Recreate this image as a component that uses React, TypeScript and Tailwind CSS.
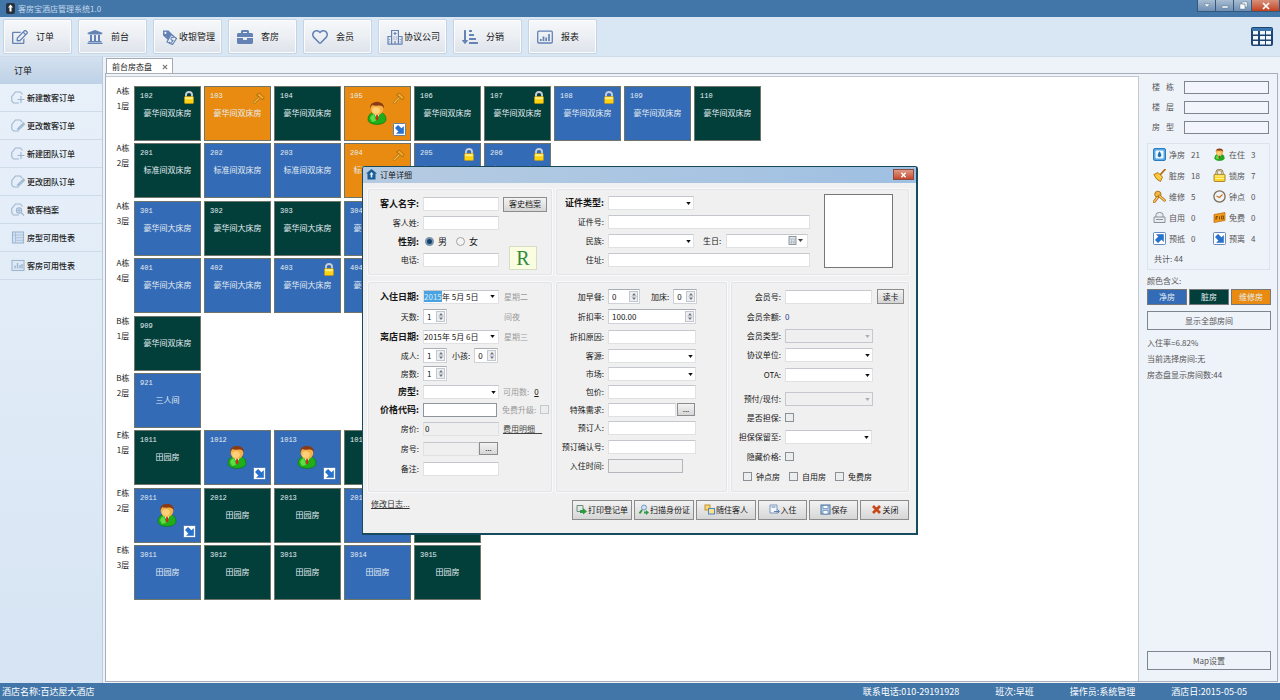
import React, { useState } from 'react';
import {
  FaRegEdit,
  FaUniversity,
  FaBriefcase,
  FaRegHeart,
  FaSortAmountDownAlt,
} from 'react-icons/fa';

type Status = 'clean' | 'dirty' | 'repair';

interface Room {
  no: string;
  status: Status;
  lock?: boolean;
  guest?: boolean;
}

interface Floor {
  building: string;
  level: string;
  type: string;
  rooms: Room[];
}

const tileColors: Record<Status, string> = {
  clean: 'bg-[#346bb6]',
  dirty: 'bg-[#023f3b]',
  repair: 'bg-[#e88b10]',
};

const floors: Floor[] = [
  {
    building: 'A栋', level: '1层', type: '豪华间双床房',
    rooms: [
      { no: '102', status: 'dirty', lock: true },
      { no: '103', status: 'repair' },
      { no: '104', status: 'dirty' },
      { no: '105', status: 'repair', guest: true },
      { no: '106', status: 'dirty' },
      { no: '107', status: 'dirty', lock: true },
      { no: '108', status: 'clean', lock: true },
      { no: '109', status: 'clean' },
      { no: '110', status: 'dirty' },
    ],
  },
  {
    building: 'A栋', level: '2层', type: '标准间双床房',
    rooms: [
      { no: '201', status: 'dirty' },
      { no: '202', status: 'clean' },
      { no: '203', status: 'clean' },
      { no: '204', status: 'repair' },
      { no: '205', status: 'clean', lock: true },
      { no: '206', status: 'clean', lock: true },
    ],
  },
  {
    building: 'A栋', level: '3层', type: '豪华间大床房',
    rooms: [
      { no: '301', status: 'clean' },
      { no: '302', status: 'dirty' },
      { no: '303', status: 'dirty' },
      { no: '304', status: 'clean' },
    ],
  },
  {
    building: 'A栋', level: '4层', type: '豪华间大床房',
    rooms: [
      { no: '401', status: 'clean' },
      { no: '402', status: 'clean' },
      { no: '403', status: 'clean', lock: true },
      { no: '404', status: 'clean' },
    ],
  },
  { building: 'B栋', level: '1层', type: '豪华间双床房', rooms: [{ no: '909', status: 'dirty' }] },
  { building: 'B栋', level: '2层', type: '三人间', rooms: [{ no: '921', status: 'clean' }] },
  {
    building: 'E栋', level: '1层', type: '田园房',
    rooms: [
      { no: '1011', status: 'dirty' },
      { no: '1012', status: 'clean', guest: true },
      { no: '1013', status: 'clean', guest: true },
      { no: '1014', status: 'dirty' },
    ],
  },
  {
    building: 'E栋', level: '2层', type: '田园房',
    rooms: [
      { no: '2011', status: 'clean', guest: true },
      { no: '2012', status: 'dirty' },
      { no: '2013', status: 'dirty' },
      { no: '2014', status: 'clean' },
      { no: '2015', status: 'dirty' },
    ],
  },
  {
    building: 'E栋', level: '3层', type: '田园房',
    rooms: [
      { no: '3011', status: 'clean' },
      { no: '3012', status: 'dirty' },
      { no: '3013', status: 'dirty' },
      { no: '3014', status: 'clean' },
      { no: '3015', status: 'dirty' },
    ],
  },
];

/* ---------- Icons ---------- */

interface IconProps {
  className?: string;
}

const TagIcon = ({ className = '' }: IconProps) => (
  <svg viewBox="0 0 16 16" className={className}>
    <path d="M1 1.500h5.500L12 7 7 12 1 6.500z" fill="currentColor" />
    <circle cx="3.400" cy="3.900" r="1.100" fill="#eef2f6" />
    <path d="m9 5.500 5.500 4-4 6L5 13z" fill="#eef2f6" stroke="currentColor" strokeWidth="1.300" strokeLinejoin="round" />
    <path d="M11.800 8.800Q9 7.500 9 9.500t1.500 1.700-.800 2-2.200-.400" fill="none" stroke="currentColor" strokeWidth="1.100" />
  </svg>
);

const BuildingIcon = ({ className = '' }: IconProps) => (
  <svg viewBox="0 0 16 16" className={className} fill="none" stroke="currentColor" strokeWidth="1.200">
    <path d="M4.600 15V1.500h6.800V15M1 15V7.500h3.600M11.400 7.500H15V15M.500 15.200h15" />
    <path d="M8 3v3M6.500 4.500h3M6.500 8h1M8.700 8h1M6.500 10h1M8.700 10h1M8 15v-3M2.500 10v.800M2.500 12.500v.800M13.300 10v.800M13.300 12.500v.800" />
  </svg>
);

const ChartIcon = ({ className = '' }: IconProps) => (
  <svg viewBox="0 0 16 16" className={className} fill="none" stroke="currentColor">
    <rect x="0.700" y="2.200" width="14.600" height="11.800" rx="1" strokeWidth="1.300" />
    <path d="M3.800 12v-2M6.500 12V7.500M9.200 12V8.500M12 12V5" strokeWidth="1.700" />
  </svg>
);

const LockIcon = ({ className = '' }: IconProps) => (
  <svg viewBox="0 0 10 13" className={className}>
    <path d="M2 6V3.600Q2 1 5 1t3 2.600V6" fill="none" stroke="#c9ced6" strokeWidth="1.900" />
    <rect x="0.500" y="5.500" width="9" height="7" rx="0.800" fill="#fbd312" stroke="#c79412" strokeWidth="0.600" />
    <rect x="1.200" y="6.200" width="7.600" height="2" fill="#fff08a" />
  </svg>
);

const PadlockIcon = ({ className = '' }: IconProps) => (
  <svg viewBox="0 0 13 13" className={className}>
    <path d="M3.500 6V4Q3.500 1 6.500 1t3 3v2" fill="none" stroke="#7d6a3c" strokeWidth="2" />
    <path d="M3.500 6V4Q3.500 1 6.500 1t3 3v2" fill="none" stroke="#f3e9c2" strokeWidth="0.800" />
    <rect x="1" y="5.300" width="11" height="7.200" rx="0.800" fill="#fbd62a" stroke="#9a7414" strokeWidth="0.800" />
    <path d="M2 7h9M2 9.500h9" stroke="#fff3a0" strokeWidth="1" />
  </svg>
);

const HammerIcon = ({ className = '' }: IconProps) => (
  <svg viewBox="0 0 12 12" className={className}>
    <path d="M1 11 7.500 4.500" stroke="#8a5a14" strokeWidth="2.400" strokeLinecap="round" />
    <path d="M1 11 7.500 4.500" stroke="#f9bd3c" strokeWidth="1.400" strokeLinecap="round" />
    <path d="M3.500 3 6.500 1 11 5.500 9.500 8 7 5.500z" fill="#f5a623" stroke="#8a5a14" strokeWidth="0.700" />
  </svg>
);

const WrenchIcon = ({ className = '' }: IconProps) => (
  <svg viewBox="0 0 12 12" className={className}>
    <circle cx="4.500" cy="4" r="2.900" fill="#f6b73c" stroke="#a56a12" strokeWidth="0.800" />
    <path d="M1 11 4 7M6 5.500l4.500 4" stroke="#a56a12" strokeWidth="2.600" strokeLinecap="round" />
    <path d="M1 11 4 7M6 5.500l4.500 4" stroke="#fbc65a" strokeWidth="1.400" strokeLinecap="round" />
  </svg>
);

const GuestIcon = ({ className = '' }: IconProps) => (
  <svg viewBox="0 0 20 24" className={className}>
    <path d="M1 19q0-7 6-7.500h6q6 .500 6 7.500-1 4-9 4.500-8-.500-9-4.500z" fill="#1fae1a" stroke="#0c7a10" strokeWidth="0.700" />
    <path d="M3 17q1-3 4-4l2 7-4 1z" fill="#62dc46" />
    <path d="M7 12h6l-3 6z" fill="#fff" />
    <path d="m9.300 13.500h1.500l.700 4.500-1.400 1.500-1.300-1.500z" fill="#d42a1a" />
    <ellipse cx="10" cy="8" rx="6.300" ry="6" fill="#f7b046" />
    <ellipse cx="9" cy="9.500" rx="3.800" ry="3.200" fill="#ffd07a" />
    <path d="M3.200 7.500Q2.500 1.500 10 .800 17.500 1.500 16.800 7.500 15.500 4 12 4.500 7 5 5 4 4 5.500 3.200 7.500z" fill="#8a3a14" />
  </svg>
);

const ArrowBadge = ({ className = '', up = false }: IconProps & { up?: boolean }) => (
  <svg viewBox="0 0 13 13" className={className}>
    <rect x="0.500" y="0.500" width="12" height="12" rx="1" fill="#fff" stroke="#3f6fae" strokeWidth="0.800" />
    {up ? (
      <path d="M3.500 2.500h7v7L8.500 7.500 5 10.800 2.300 8 5.500 4.500z" fill="#2473d2" stroke="#154d99" strokeWidth="0.400" />
    ) : (
      <path d="M10.600 10.600h-7l2-2L2.300 5 5 2.300l3.500 3.300 2.100-2z" fill="#2473d2" stroke="#154d99" strokeWidth="0.400" />
    )}
  </svg>
);

const SideIcon = ({ kind }: { kind: string }) => (
  <svg viewBox="0 0 14 13" className="h-[13px] w-[14px]" fill="none" stroke="#9db6cf" strokeWidth="1.100">
    {['add', 'edit', 'file'].includes(kind) && <path d="M8 12H2.500L.800 10V5.500L4.500 1h4.800L11.500 3.500" />}
    {kind === 'add' && <path d="M10 5v7M6.500 8.500h7" />}
    {kind === 'edit' && <path d="m6.500 10 6-6 1 1.200-5.500 5.500z" fill="#c9d9ea" />}
    {kind === 'file' && (
      <>
        <circle cx="8" cy="7.500" r="2.600" fill="#dfe9f4" />
        <path d="m10 9.500 3 3M8 6v3M6.500 7.500h3" />
      </>
    )}
    {kind === 'table' && (
      <>
        <rect x="1.500" y="1" width="11" height="11" fill="#d3e2f3" />
        <path d="M4.500 1v11M1.500 4h11M4.500 6.700h8M4.500 9.300h8" strokeWidth="0.700" />
      </>
    )}
    {kind === 'chart' && (
      <>
        <rect x="1" y="1.500" width="12" height="10" fill="#dfe9f6" />
        <path d="M4 9.500v-3M6.500 9.500V4M9 9.500V6M11 9.500V5" strokeWidth="1.400" />
      </>
    )}
  </svg>
);

const StatIcon = ({ kind }: { kind: string }) => {
  const cls = 'h-[13px] w-[13px]';
  switch (kind) {
    case 'clean':
      return (
        <svg viewBox="0 0 13 13" className={cls}>
          <rect x="0.500" y="0.500" width="12" height="12" rx="1.500" fill="#59a9e6" stroke="#2b7cc0" />
          <rect x="2.500" y="2.500" width="8" height="8" rx="1" fill="#f2faff" />
          <path d="M6.500 3.200q3.800 4.800 0 6-3.800-1.200 0-6z" fill="#1f6fb8" />
        </svg>
      );
    case 'guest':
      return <GuestIcon className={cls} />;
    case 'dirty':
      return (
        <svg viewBox="0 0 13 13" className={cls}>
          <path d="m7.500 5.500 4.500-5" stroke="#b36d0c" strokeWidth="1.800" strokeLinecap="round" />
          <path d="M.800 5.500 5 3.500 9.500 8 7.500 12.500Q3 11 .800 5.500z" fill="#fbbf24" stroke="#a8660c" strokeWidth="0.800" />
          <path d="m3 6.500 4 4M5 5.500l3.500 3.500" stroke="#fff0a8" strokeWidth="0.700" />
        </svg>
      );
    case 'lock':
      return <PadlockIcon className={cls} />;
    case 'repair':
      return <WrenchIcon className={cls} />;
    case 'clock':
      return (
        <svg viewBox="0 0 13 13" className={cls}>
          <circle cx="6.500" cy="6.500" r="5.600" fill="#eef4fa" stroke="#7d6a52" strokeWidth="1.300" />
          <path d="m3.500 6 3 1.500L9.500 4.500" fill="none" stroke="#d07018" strokeWidth="1.100" />
        </svg>
      );
    case 'self':
      return (
        <svg viewBox="0 0 13 13" className={cls} fill="#e9edf1" stroke="#7f8890" strokeWidth="0.900">
          <path d="M3 6V3.500Q3 1.500 6.500 1.500T10 3.500V6" />
          <path d="M1 6h11v5.500H1zM3 8.500h7" />
        </svg>
      );
    case 'free':
      return (
        <svg viewBox="0 0 13 13" className={cls}>
          <path d="M1 3.500 12 1.500v8L1 11.500z" fill="#f29a1a" stroke="#b8690a" strokeWidth="0.700" />
          <path d="M3 9V5.500h2M3 7h1.500M6.500 8.500V5.500M8.500 5v3h2V5z" stroke="#6b3c05" strokeWidth="0.800" fill="none" />
        </svg>
      );
    case 'arrive':
      return <ArrowBadge className={cls} up />;
    default:
      return <ArrowBadge className={cls} />;
  }
};

const ActionIcon = ({ kind }: { kind: string }) => (
  <svg viewBox="0 0 11 11" className="h-[11px] w-[11px] shrink-0" fill="none">
    {kind === 'print' && (
      <>
        <path d="M1 1.500h6v6H1z" fill="#dfe9e4" stroke="#6f8c80" />
        <path d="M4 6h3V4l4 3.500-4 3V9H4z" fill="#2d9a45" />
      </>
    )}
    {kind === 'scan' && (
      <>
        <circle cx="6" cy="3.500" r="2.500" fill="#cfe3f5" stroke="#6f96bd" />
        <path d="M4 6 1.500 9.500" stroke="#2d9a45" strokeWidth="2" />
        <path d="M6 7.500h2V6l3 2.500-3 2.500V9.500H6z" fill="#2d9a45" />
      </>
    )}
    {kind === 'follow' && (
      <>
        <rect x="1" y="1" width="5" height="5" fill="#f9d77a" stroke="#c29427" />
        <rect x="4.500" y="4.500" width="6" height="5.500" fill="#fbe08e" stroke="#4f86c4" />
      </>
    )}
    {kind === 'checkin' && (
      <>
        <path d="M1 1h7v8H1z" fill="#f4f8fd" stroke="#7a94b8" />
        <path d="M2.500 3h4M5 7.500h5M8.500 5.500l2 2-2 2" stroke="#5a82b8" />
      </>
    )}
    {kind === 'save' && (
      <>
        <rect x="1" y="1" width="9" height="9" fill="#b5cfec" stroke="#44729f" />
        <path d="M3 1.500h5v3H3zM3 6.500h5V10H3z" fill="#fff" stroke="#44729f" strokeWidth="0.600" />
      </>
    )}
    {kind === 'close' && <path d="m2 2 7 7M9 2 2 9" stroke="#c9481a" strokeWidth="2.800" />}
  </svg>
);

/* ---------- Form controls ---------- */

const inputBase = 'h-[14px] border border-[#dfe1e5] border-t-[#c4c8ce] bg-white px-px text-[8px] leading-none outline-none';

interface RowProps {
  label: string;
  id?: string;
  bold?: boolean;
  tall?: boolean;
  width?: string;
  className?: string;
  children: React.ReactNode;
}

const Row = ({ label, id, bold, tall, width = 'w-[50px]', className = '', children }: RowProps) => (
  <div className={`flex items-center gap-1 ${tall ? 'h-5' : 'h-[18px]'} ${className}`}>
    <label
      htmlFor={id}
      className={`${width} shrink-0 text-right whitespace-nowrap ${bold ? 'text-[9px] font-bold' : 'text-[8px]'}`}
    >
      {label}:
    </label>
    {children}
  </div>
);

const Text = ({ id, width = 'w-[76px]', value = '', disabled = false }: { id: string; width?: string; value?: string; disabled?: boolean }) => (
  <input
    id={id}
    type="text"
    defaultValue={value}
    disabled={disabled}
    className={`${inputBase} ${width} disabled:bg-[#efefef]`}
  />
);

const Select = ({ id, width = 'w-[76px]', disabled = false }: { id: string; width?: string; disabled?: boolean }) => (
  <span className={`relative flex ${width}`}>
    <select id={id} disabled={disabled} className={`${inputBase} w-full appearance-none disabled:border-[#c4c8ce] disabled:bg-[#efefef]`}>
      <option></option>
    </select>
    <svg viewBox="0 0 6 4" className="pointer-events-none absolute top-[6px] right-[3px] h-[3px] w-[5px]">
      <path d="M0 0h6L3 4z" fill={disabled ? '#a9adb3' : '#111'} />
    </svg>
  </span>
);

const Spin = ({ id, value, width = 'w-6' }: { id: string; value: string; width?: string }) => (
  <span className={`flex h-[15px] ${width} items-center border border-[#cfd3d9] border-t-[#a9aeb6] bg-white pr-px`}>
    <input id={id} type="text" defaultValue={value} className="w-0 flex-1 pl-[3px] text-[8px] leading-none outline-none" />
    <button type="button" aria-label="调整" className="flex h-[11px] w-[9px] items-center justify-center border border-[#c3c7cd] bg-[#eceef1]">
      <svg viewBox="0 0 6 9" className="h-[9px] w-[6px]">
        <path d="M1 3.500h4L3 1zM1 5.500h4L3 8z" fill="#6d7580" />
        <path d="M0 4.500h6" stroke="#c3c7cd" strokeWidth="0.600" />
      </svg>
    </button>
  </span>
);

const DateBox = ({ id, year, rest, selected }: { id: string; year: string; rest: string; selected?: boolean }) => (
  <span className="flex h-[14px] w-[76px] items-center border border-[#dfe1e5] border-t-[#c4c8ce] bg-white">
    <input
      id={id}
      type="text"
      defaultValue={year}
      className={`w-[18px] text-[8px] leading-[11px] outline-none ${selected ? 'bg-[#4aa3e0] text-[#d7ecfb]' : ''}`}
    />
    <input type="text" aria-label="月日" defaultValue={rest} className="w-0 flex-1 text-[8px] leading-none outline-none" />
    <svg viewBox="0 0 6 4" className="mr-[3px] h-[3px] w-[5px]">
      <path d="M0 0h6L3 4z" fill="#111" />
    </svg>
  </span>
);

const Check = ({ id, disabled = false }: { id: string; disabled?: boolean }) => (
  <input
    id={id}
    type="checkbox"
    disabled={disabled}
    className="h-[9px] w-[9px] shrink-0 appearance-none border border-[#8b9096] bg-[#eceded] checked:bg-[#346bb6] disabled:border-[#c4c8cc]"
  />
);

const btn = 'border border-[#8c8c8c] bg-linear-to-b from-[#f3f3f3] to-[#d6d6d6] whitespace-nowrap text-[8px] leading-none';

const panel = 'rounded-[2px] border border-[#e2e4e8] shadow-[0_0_0_1px_#f8f9fa]';

/* ---------- Order dialog ---------- */

const actions = [
  { icon: 'print', text: '打印登记单', width: 'w-[60px]' },
  { icon: 'scan', text: '扫描身份证', width: 'w-[60px]' },
  { icon: 'follow', text: '随住客人', width: 'w-[60px]' },
  { icon: 'checkin', text: '入住', width: 'w-[49px]' },
  { icon: 'save', text: '保存', width: 'w-[49px]' },
  { icon: 'close', text: '关闭', width: 'w-[49px]' },
];

const OrderDialog = ({ onClose }: { onClose: () => void }) => (
  <div
    role="dialog"
    aria-label="订单详细"
    className="w-[556px] rounded-t-[3px] border-t border-r-2 border-b-2 border-l border-[#174a5c] bg-[#f0f0f0] text-[#161616]"
  >
    <div className="flex h-4 items-center rounded-t-[2px] bg-linear-to-r from-[#b6cbe2] to-[#9fc0e2] pl-[3px]">
      <svg viewBox="0 0 11 11" className="h-[11px] w-[11px]">
        <path d="M5.500 0 11 4.500H9.500V10.500h-8V4.500H0z" fill="#1a5c94" />
        <path d="M5.500 3 7.500 5.500h-1.200v3H4.700v-3H3.500z" fill="#e8f2fb" />
      </svg>
      <h2 className="ml-[3px] text-[8px] leading-none">订单详细</h2>
      <button
        type="button"
        aria-label="关闭"
        onClick={onClose}
        className="mr-[2px] ml-auto flex h-[11px] w-[21px] items-center justify-center border border-[#8d4a40] bg-linear-to-b from-[#dc9a86] to-[#c5462a]"
      >
        <svg viewBox="0 0 7 7" className="h-[6px] w-[7px]"><path d="m1 1 5 5M6 1 1 6" stroke="#fff" strokeWidth="1.600" /></svg>
      </button>
    </div>

    <form className="pt-[6px] pr-[7px] pl-[5px]" onSubmit={e => e.preventDefault()}>
      <div className="grid grid-cols-[184px_171px_1fr] gap-x-1 gap-y-[7px]">
        {/* Guest name */}
        <section className={`${panel} flex gap-1 pt-[5px] pb-1`}>
          <div>
            <Row label="客人名字" id="name" bold><Text id="name" /></Row>
            <Row label="客人姓" id="surname" tall><Text id="surname" /></Row>
            <Row label="性别" bold>
              <input id="male" name="sex" type="radio" defaultChecked className="ml-[2px] h-[9px] w-[9px] appearance-none rounded-full border border-[#8b9096] bg-white checked:border-2 checked:border-[#7d93aa] checked:bg-[#12436f]" />
              <label htmlFor="male" className="text-[9px]">男</label>
              <input id="female" name="sex" type="radio" className="ml-[5px] h-[9px] w-[9px] appearance-none rounded-full border border-[#9fa4aa] bg-[#f4f4f4] checked:border-2 checked:border-[#7d93aa] checked:bg-[#12436f]" />
              <label htmlFor="female" className="text-[9px]">女</label>
            </Row>
            <Row label="电话" id="phone"><Text id="phone" /></Row>
          </div>
          <div className="flex flex-1 flex-col justify-between pt-[2px]">
            <button type="button" className={`${btn} h-[15px] w-[44px]`}>客史档案</button>
            <span className="ml-[6px] flex h-[24px] w-[28px] items-center justify-center border border-[#d7dcc6] bg-[#fbfde0] font-['Liberation_Serif',serif] text-[20px] leading-none text-[#2f8b3c]">R</span>
          </div>
        </section>

        {/* ID papers */}
        <section className={`${panel} col-span-2 flex pt-1 pb-1`}>
          <div>
            <Row label="证件类型" id="idtype" bold width="w-[47px]"><Select id="idtype" width="w-[86px]" /></Row>
            <Row label="证件号" id="idno" tall width="w-[47px]"><Text id="idno" width="w-[202px]" /></Row>
            <Row label="民族" id="nation" width="w-[47px]">
              <Select id="nation" width="w-[86px]" />
              <label htmlFor="birth" className="ml-[5px] text-[8px]">生日:</label>
              <span className="ml-px flex h-[14px] w-[82px] items-center border border-[#dfe1e5] border-t-[#c4c8ce] bg-white">
                <input id="birth" type="text" className="w-0 flex-1 text-[8px] leading-none outline-none" />
                <svg viewBox="0 0 16 9" className="mr-[3px] h-[9px] w-4">
                  <rect x="1" y="0.500" width="7" height="8" fill="#dfe4ea" stroke="#77808a" strokeWidth="0.800" />
                  <path d="M1 3h7M3.500 3v5.500M6 3v5.500M1 6h7" stroke="#98a1ab" strokeWidth="0.500" />
                  <path d="M10 3h5l-2.500 3z" fill="#444" />
                </svg>
              </span>
            </Row>
            <Row label="住址" id="addr" tall width="w-[47px]"><Text id="addr" width="w-[202px]" /></Row>
          </div>
          <div className="ml-[14px] h-[74px] w-[69px] border border-[#777] bg-white" />
        </section>

        {/* Stay */}
        <section className={`${panel} pt-1 pb-3`}>
          <Row label="入住日期" id="arrive" bold tall>
            <DateBox id="arrive" year="2015" rest="年 5月 5日" selected />
            <span className="ml-px text-[8px] text-[#9b9b9b]">星期二</span>
          </Row>
          <Row label="天数" id="days" tall>
            <Spin id="days" value="1" />
            <span className="ml-[53px] text-[8px] text-[#9b9b9b]">间夜</span>
          </Row>
          <Row label="离店日期" id="leave" bold tall>
            <DateBox id="leave" year="2015" rest="年 5月 6日" />
            <span className="ml-px text-[8px] text-[#9b9b9b]">星期三</span>
          </Row>
          <Row label="成人" id="adult">
            <Spin id="adult" value="1" />
            <label htmlFor="child" className="ml-px text-[8px]">小孩:</label>
            <Spin id="child" value="0" />
          </Row>
          <Row label="房数" id="count"><Spin id="count" value="1" /></Row>
          <Row label="房型" id="rtype" bold>
            <Select id="rtype" />
            <span className="text-[8px] text-[#9b9b9b]">可用数:</span>
            <a href="#avail" className="ml-px text-[8px] underline">0</a>
          </Row>
          <Row label="价格代码" id="rate" bold>
            <input id="rate" type="text" className="h-[14px] w-[74px] border border-[#8f959c] bg-white text-[8px] outline-none" />
            <label htmlFor="upgrade" className="ml-px text-[8px] text-[#9b9b9b]">免费升级:</label>
            <Check id="upgrade" disabled />
          </Row>
          <Row label="房价" id="price" tall>
            <Text id="price" value="0" disabled />
            <a href="#detail" className="text-[8px] whitespace-pre text-[#444] underline">费用明细    </a>
          </Row>
          <Row label="房号" id="roomno" tall>
            <span className="flex">
              <Text id="roomno" width="w-14" disabled />
              <button type="button" className={`${btn} h-[13px] w-[19px]`}>...</button>
            </span>
          </Row>
          <Row label="备注" id="remark" tall><Text id="remark" /></Row>
        </section>

        {/* Rate and source */}
        <section className={`${panel} pt-1`}>
          <Row label="加早餐" id="bf" tall width="w-[47px]">
            <Spin id="bf" value="0" width="w-8" />
            <label htmlFor="bed" className="ml-[7px] text-[8px]">加床:</label>
            <Spin id="bed" value="0" />
          </Row>
          <Row label="折扣率" id="disc" tall width="w-[47px]"><Spin id="disc" value="100.00" width="w-[88px]" /></Row>
          <Row label="折扣原因" id="reason" tall width="w-[47px]"><Text id="reason" width="w-[88px]" /></Row>
          <Row label="客源" id="source" width="w-[47px]"><Select id="source" width="w-[88px]" /></Row>
          <Row label="市场" id="market" width="w-[47px]"><Select id="market" width="w-[88px]" /></Row>
          <Row label="包价" id="pack" width="w-[47px]"><Text id="pack" width="w-[88px]" /></Row>
          <Row label="特殊需求" id="need" width="w-[47px]">
            <span className="flex gap-px">
              <Text id="need" width="w-[68px]" />
              <button type="button" className={`${btn} h-[13px] w-[18px]`}>...</button>
            </span>
          </Row>
          <Row label="预订人" id="booker" width="w-[47px]"><Text id="booker" width="w-[88px]" /></Row>
          <Row label="预订确认号" id="confirm" tall width="w-[47px]"><Text id="confirm" width="w-[88px]" /></Row>
          <Row label="入住时间" id="intime" width="w-[47px]">
            <input id="intime" type="text" disabled className="h-[14px] w-[75px] border border-[#b4b7bb] bg-[#efefef]" />
          </Row>
        </section>

        {/* Membership */}
        <section className={`${panel} pt-1`}>
          <Row label="会员号" id="member" tall width="w-[49px]">
            <Text id="member" width="w-[87px]" />
            <button type="button" className={`${btn} ml-px h-[15px] w-[27px]`}>读卡</button>
          </Row>
          <Row label="会员余额" tall width="w-[49px]"><span className="text-[8px] text-[#2b3f8f]">0</span></Row>
          <Row label="会员类型" id="mtype" width="w-[49px]"><Select id="mtype" width="w-[88px]" disabled /></Row>
          <Row label="协议单位" id="corp" tall width="w-[49px]"><Select id="corp" width="w-[88px]" /></Row>
          <Row label="OTA" id="ota" tall width="w-[49px]"><Select id="ota" width="w-[88px]" /></Row>
          <Row label="预付/现付" id="pay" tall width="w-[49px]" className="mt-1"><Select id="pay" width="w-[88px]" disabled /></Row>
          <Row label="是否担保" id="guar" width="w-[49px]"><Check id="guar" /></Row>
          <Row label="担保保留至" id="until" tall width="w-[49px]"><Select id="until" width="w-[87px]" /></Row>
          <Row label="隐藏价格" id="hide" tall width="w-[49px]"><Check id="hide" /></Row>
          <div className="flex h-5 items-center pl-[11px] text-[8px]">
            <Check id="hour" />
            <label htmlFor="hour" className="mr-[9px] ml-1">钟点房</label>
            <Check id="self" />
            <label htmlFor="self" className="mr-[9px] ml-1">自用房</label>
            <Check id="free" />
            <label htmlFor="free" className="ml-1">免费房</label>
          </div>
        </section>
      </div>

      <div className="flex h-[41px] items-start pt-2">
        <a href="#log" className="ml-[3px] text-[8px] text-[#333] underline">修改日志...</a>
        <div className="ml-auto flex gap-[2px]">
          {actions.map(a => (
            <button key={a.text} type="button" className={`${btn} ${a.width} flex h-5 items-center justify-center gap-px`}>
              <ActionIcon kind={a.icon} />
              {a.text}
            </button>
          ))}
        </div>
      </div>
    </form>
  </div>
);

/* ---------- Main window ---------- */

const toolbar = [
  { text: '订单', icon: FaRegEdit },
  { text: '前台', icon: FaUniversity },
  { text: '收银管理', icon: TagIcon },
  { text: '客房', icon: FaBriefcase },
  { text: '会员', icon: FaRegHeart },
  { text: '协议公司', icon: BuildingIcon },
  { text: '分销', icon: FaSortAmountDownAlt },
  { text: '报表', icon: ChartIcon },
];

const sideItems = [
  { text: '新建散客订单', kind: 'add' },
  { text: '更改散客订单', kind: 'edit' },
  { text: '新建团队订单', kind: 'add' },
  { text: '更改团队订单', kind: 'edit' },
  { text: '散客档案', kind: 'file' },
  { text: '房型可用性表', kind: 'table' },
  { text: '客房可用性表', kind: 'chart' },
];

const stats = [
  { kind: 'clean', text: '净房', value: 21 },
  { kind: 'guest', text: '在住', value: 3 },
  { kind: 'dirty', text: '脏房', value: 18 },
  { kind: 'lock', text: '锁房', value: 7 },
  { kind: 'repair', text: '维修', value: 5 },
  { kind: 'clock', text: '钟点', value: 0 },
  { kind: 'self', text: '自用', value: 0 },
  { kind: 'free', text: '免费', value: 0 },
  { kind: 'arrive', text: '预抵', value: 0 },
  { kind: 'depart', text: '预离', value: 4 },
];

const filters = [
  ['楼', '栋'],
  ['楼', '层'],
  ['房', '型'],
];

const RoomTile = ({ room, type }: { room: Room; type: string }) => (
  <div className={`relative h-[55px] w-[67px] border border-[#6f7568] text-[#e6eef2] ${tileColors[room.status]}`}>
    <div className="pt-[5px] pl-[5px] font-['Liberation_Mono',monospace] text-[7px] leading-[8px]">{room.no}</div>
    {!room.guest && <div className="pt-2 text-center text-[8px] leading-[10px]">{type}</div>}
    {room.lock && <LockIcon className="absolute top-1 right-[6px] h-[13px] w-[10px]" />}
    {room.status === 'repair' && <HammerIcon className="absolute top-[5px] right-[5px] h-[12px] w-[12px]" />}
    {room.guest && (
      <>
        <GuestIcon className="absolute top-[14px] left-[22px] h-[24px] w-[20px]" />
        <ArrowBadge className="absolute right-1 bottom-1 h-[13px] w-[13px]" />
      </>
    )}
  </div>
);

const App: React.FC = () => {
  const [dialogOpen, setDialogOpen] = useState(true);

  return (
    <div className="flex min-h-screen flex-col bg-[#eef2f9] font-['Noto_Sans_CJK_SC',sans-serif] text-[8px] leading-none text-[#1b1b1b]">
      {/* Title bar */}
      <header className="flex h-[17px] items-start bg-[#4276a8] pl-[6px] text-[#c3d8ec]">
        <svg viewBox="0 0 9 11" className="mt-[3px] h-[11px] w-[9px]">
          <rect width="9" height="11" rx="2" fill="#26323e" />
          <path d="M4.500 1.500 7 4.500H5.500v4h-2v-4H2z" fill="#fff" />
        </svg>
        <h1 className="mt-[5px] ml-[3px] text-[8px]">客房宝酒店管理系统1.0</h1>
        <div className="ml-auto flex h-3 border border-t-0 border-[#35597d]">
          {['M2 3h6L5 6z', 'M2 5h6v2H2z', 'M2 3h5v5H2zM4 1h5v5H7V3H4z'].map((d, i) => (
            <button key={d} type="button" aria-label={['菜单', '最小化', '还原'][i]} className="flex w-[18px] items-center justify-center border-r border-[#35597d] bg-linear-to-b from-[#a9bdd2] to-[#6f8fb2]">
              <svg viewBox="0 0 10 9" className="h-[9px] w-[10px]"><path d={d} fill="#fff" stroke="#4a6685" strokeWidth="0.400" /></svg>
            </button>
          ))}
          <button type="button" aria-label="退出" className="flex w-[27px] items-center justify-center bg-linear-to-b from-[#d8907a] to-[#c0401c]">
            <svg viewBox="0 0 8 8" className="h-2 w-2"><path d="m1 1 6 6M7 1 1 7" stroke="#fff" strokeWidth="1.700" /></svg>
          </button>
        </div>
      </header>

      {/* Toolbar */}
      <nav className="flex h-10 items-center gap-[6px] border-b border-[#cfdbe8] bg-[#d9e6f3] pl-[3px]">
        {toolbar.map(item => (
          <button
            key={item.text}
            type="button"
            className="flex h-[35px] w-[69px] items-center rounded-[2px] border border-[#c5d3e2] bg-linear-to-b from-[#f6f8fa] via-[#eceff3] to-[#dde3eb] pl-2 text-[9px] whitespace-nowrap shadow-[inset_0_0_0_1px_#fbfcfd]"
          >
            <item.icon className="h-4 w-4 shrink-0 text-[#6483b4]" />
            <span className={item.text.length > 2 ? 'ml-px' : 'ml-2'}>{item.text}</span>
          </button>
        ))}
        <button type="button" aria-label="房态图" className="mr-[7px] ml-auto">
          <svg viewBox="0 0 22 19" className="h-[19px] w-[22px]">
            <rect width="22" height="19" rx="2" fill="#1d4473" />
            <rect x="1" y="1" width="20" height="3" rx="1" fill="#3b77ae" />
            {[4, 9, 14].map(y => [2, 9, 15].map(x => <rect key={`${x}-${y}`} x={x} y={y} width="5" height="3.500" fill="#f3f8fd" />))}
          </svg>
        </button>
      </nav>

      <div className="flex flex-1">
        {/* Sidebar */}
        <aside className="w-[103px] shrink-0 border-r border-[#bccbdc] bg-linear-to-b from-[#e9f1fa] to-[#d6e4f3]">
          <h2 className="flex h-[27px] items-center bg-linear-to-b from-[#d3e1f0] to-[#bed1e6] pl-[14px] text-[9px]">订单</h2>
          <ul>
            {sideItems.map(item => (
              <li key={item.text} className="h-7 border-b border-[#cddae8]">
                <a href="#order" className="flex h-full items-center gap-[2px] pl-[11px] font-medium">
                  <SideIcon kind={item.kind} />
                  {item.text}
                </a>
              </li>
            ))}
          </ul>
        </aside>

        <main className="flex min-w-0 flex-1 flex-col pr-[2px] pb-px pl-[2px]">
          <div className="flex h-4 items-end">
            <div className="-mb-px ml-px flex h-4 w-[67px] items-center justify-between border border-b-0 border-[#a5aab2] bg-white pr-1 pl-[5px]">
              前台房态盘
              <button type="button" aria-label="关闭标签">
                <svg viewBox="0 0 7 7" className="h-[6px] w-[6px]"><path d="m1 1 5 5M6 1 1 6" stroke="#777" strokeWidth="1.300" /></svg>
              </button>
            </div>
          </div>
          <div className="flex flex-1 border border-[#a9aeb8] pt-[2px]">
            <div className="flex-1 border-t border-r border-[#c3c7ce] bg-white pt-[9px] pl-[9px]">
              <div className="flex h-[514px] flex-col justify-between">
                {floors.map(floor => (
                  <div key={floor.building + floor.level} className="flex h-[55px] gap-[3px]">
                    <div className="-mt-[3px] w-4 text-center leading-[15px] whitespace-nowrap">
                      {floor.building}
                      <br />
                      {floor.level}
                    </div>
                    {floor.rooms.map(room => (
                      <RoomTile key={room.no} room={room} type={floor.type} />
                    ))}
                  </div>
                ))}
              </div>
            </div>

            {/* Status panel */}
            <aside className="flex w-[138px] shrink-0 flex-col pt-px pr-[6px] pb-[11px] pl-2 text-[#555]">
              {filters.map(([a, b], i) => (
                <div key={b} className="flex h-5 items-center justify-between pr-[2px] pl-[5px]">
                  <label htmlFor={`filter${i}`} className="flex gap-[6px]">
                    <span>{a}</span>
                    <span>{b}</span>
                  </label>
                  <input id={`filter${i}`} type="text" className="h-[13px] w-[85px] border border-[#80868e] bg-[#f2f5fb]" />
                </div>
              ))}
              <div className="mt-[6px] mr-px grid grid-cols-[60px_1fr] border border-[#dde3ec] pl-[5px]">
                {stats.map(s => (
                  <div key={s.text} className="flex h-[21px] items-center">
                    <StatIcon kind={s.kind} />
                    <span className="ml-[3px]">{s.text}</span>
                    <span className="ml-[6px]">{s.value}</span>
                  </div>
                ))}
                <div className="col-span-2 flex h-5 items-center pl-px">共计: 44</div>
              </div>
              <div className="mt-[7px]">颜色含义:</div>
              <div className="mt-1 grid grid-cols-3 gap-[2px] text-center leading-[14px] text-[#e6eef2]">
                <div className="border border-[#777] bg-[#346bb6]">净房</div>
                <div className="border border-[#777] bg-[#023f3b]">脏房</div>
                <div className="border border-[#777] bg-[#e88b10]">维修房</div>
              </div>
              <button type="button" className="mt-[6px] h-[19px] border border-[#80868e]">显示全部房间</button>
              <div className="mt-[5px] leading-4">
                <p>入住率=6.82%</p>
                <p>当前选择房间:无</p>
                <p>房态盘显示房间数:44</p>
              </div>
              <button type="button" className="mt-auto h-[19px] border border-[#80868e]">Map设置</button>
            </aside>
          </div>
        </main>
      </div>

      {/* Status bar */}
      <footer className="flex h-[17px] items-center gap-9 bg-[#4276a8] pr-[33px] pl-[2px] text-[9px] text-white">
        <span className="mr-auto">酒店名称:百达屋大酒店</span>
        <span>联系电话:010-29191928</span>
        <span>班次:早班</span>
        <span>操作员:系统管理</span>
        <span>酒店日:2015-05-05</span>
      </footer>

      {dialogOpen && (
        <div className="fixed inset-0 flex items-center justify-center">
          <OrderDialog onClose={() => setDialogOpen(false)} />
        </div>
      )}
    </div>
  );
};

export default App;
